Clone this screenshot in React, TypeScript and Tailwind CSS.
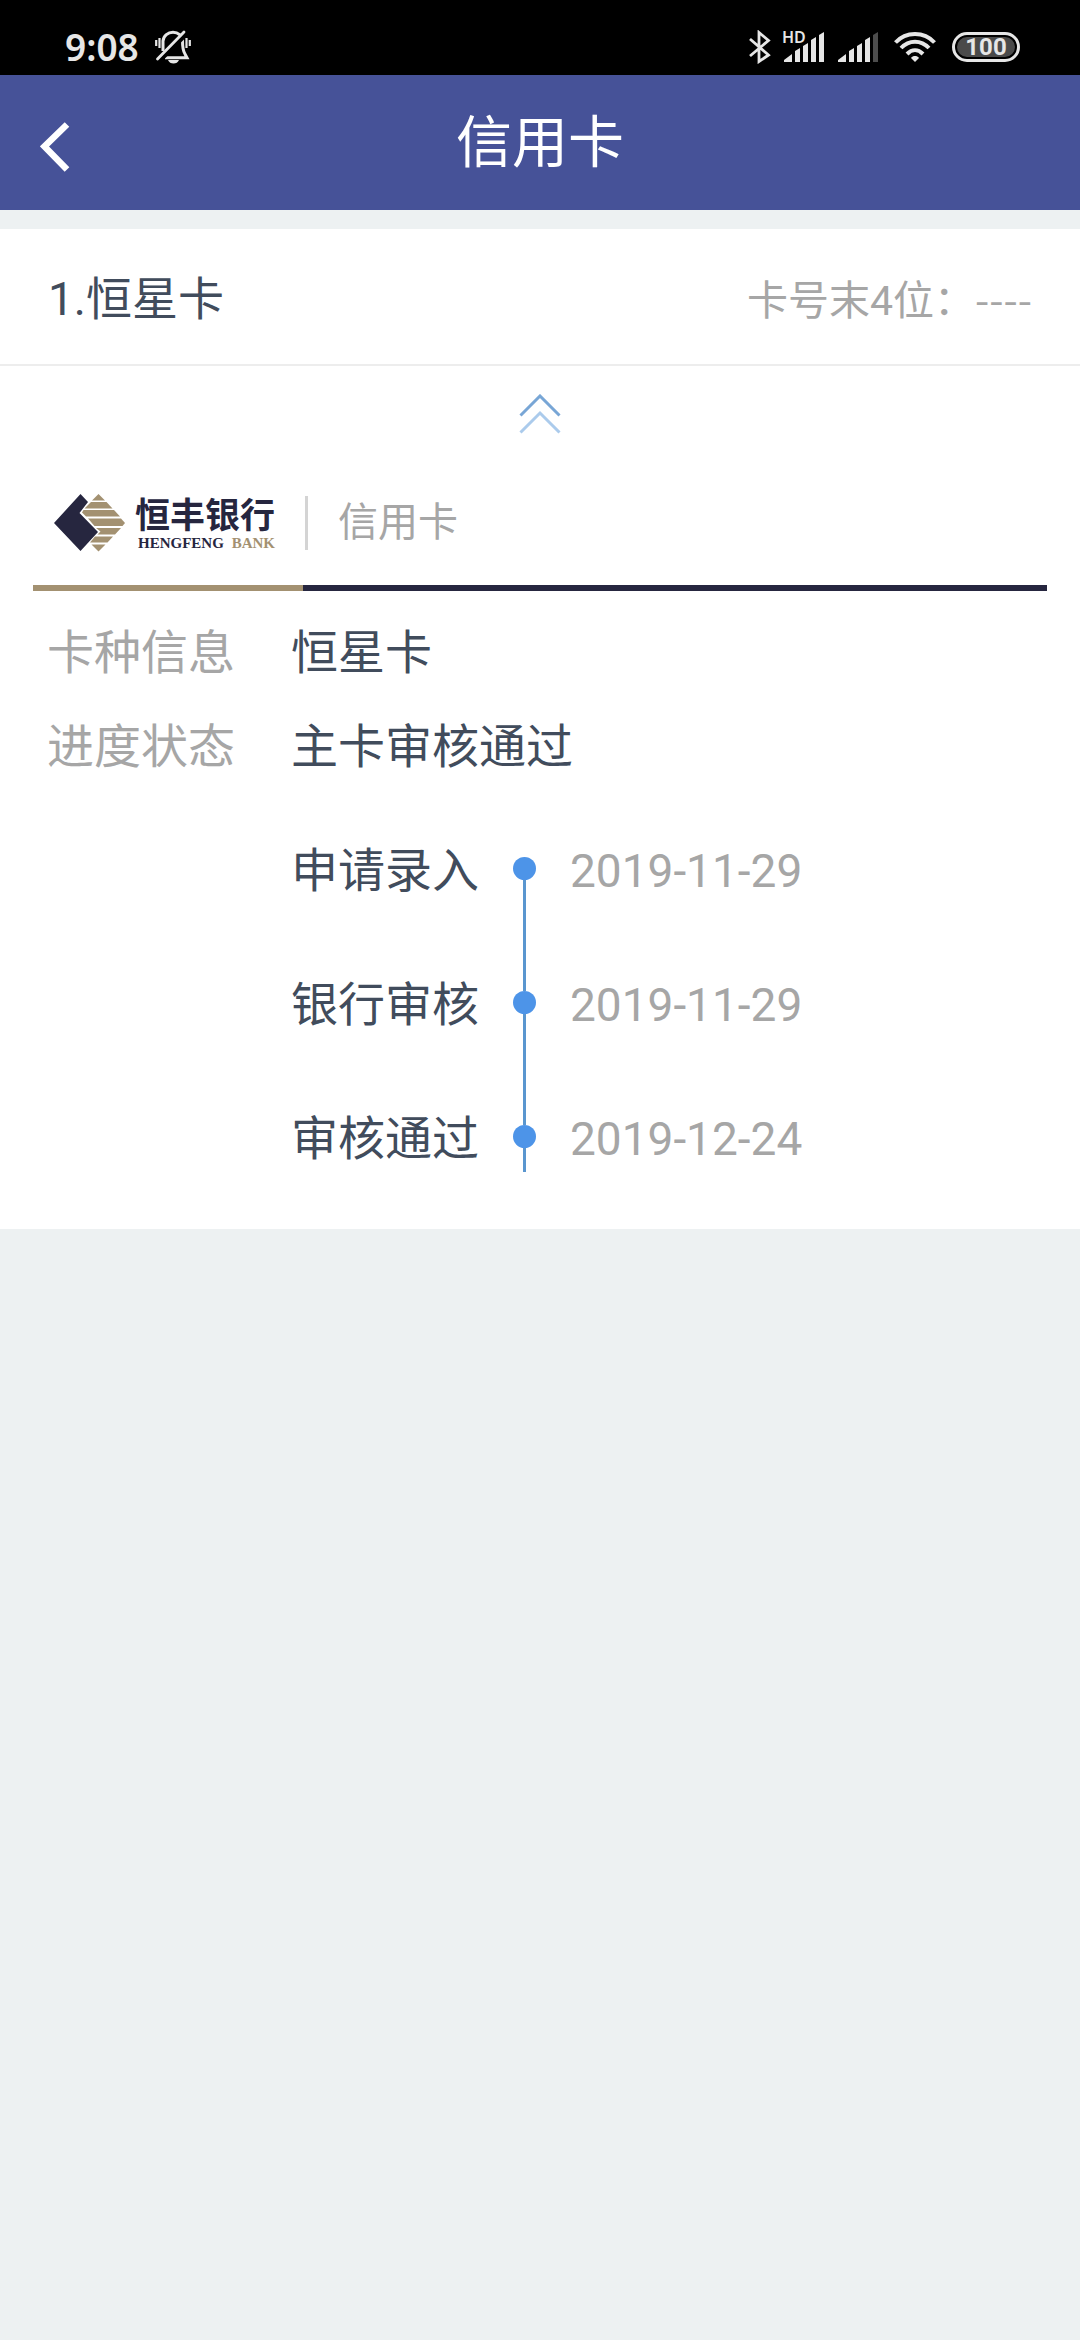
import React from 'react';

type Step = { label: string; date: string };

const steps: Step[] = [
	{ label: '申请录入', date: '2019-11-29' },
	{ label: '银行审核', date: '2019-11-29' },
	{ label: '审核通过', date: '2019-12-24' },
];

const details = [
	{ label: '卡种信息', value: '恒星卡' },
	{ label: '进度状态', value: '主卡审核通过' },
];

function MutedBell() {
	return (
		<svg viewBox="0 0 36 34" className="w-9 h-[34px]" fill="none" stroke="#e6e6e6" strokeWidth="3">
			<path d="M8 21V11C8.500 5.500 13 2.200 18 2.200s9.500 3.300 9.500 8.800c0 5 .2 9.500 2.500 13l2 3.800H10" />
			<path d="M4.500 31 31 4.500" stroke="#000" strokeWidth="4" />
			<path d="M2.500 29 29 2" strokeLinecap="round" strokeWidth="2.800" />
			<path d="M1.200 10v6M4.500 8v10M31.500 8v10M34.800 10v6" strokeWidth="2.200" />
			<path d="M13 30h11c-1 2.500-3 3.500-5.500 3.500s-4.500-1-5.500-3.500z" fill="#e6e6e6" stroke="none" />
		</svg>
	);
}

function Bluetooth() {
	return (
		<svg viewBox="0 0 22 34" className="w-[22px] h-[34px]" fill="none" stroke="#e6e6e6" strokeWidth="2.800">
			<path d="M1 9 19.500 25 10 31.500V2.500l9.500 8L1 26" />
		</svg>
	);
}

function Signal({ weak }: { weak?: boolean }) {
	return (
		<svg viewBox="0 0 41 30" className="w-[41px] h-[30px]" fill="#e6e6e6">
			<path d="M0 30v-2l8-6v8zM11 30V19l5-3v14zM19 30V14l5-3v19zM27 30V8l5-3v25z" />
			<path d="M35 30V3l5-3v30z" fill={weak ? '#4d4d4d' : '#e6e6e6'} />
		</svg>
	);
}

function Wifi() {
	return (
		<svg viewBox="0 0 42 30" className="w-[42px] h-[30px]" fill="none" stroke="#e6e6e6" strokeWidth="4">
			<path d="M1.500 10.500C12-.8 30-.8 40.500 10.500M7 16c8-8.500 20-8.500 28 0M13 22c5-5 11-5 16 0" />
			<path d="M17 26c2-2.600 6-2.600 8 0l-4 4z" fill="#e6e6e6" stroke="none" />
		</svg>
	);
}

function StatusBar() {
	return (
		<div className="flex h-[75px] items-center justify-between bg-black pt-[19px] pr-[60px] pl-[65px] text-[#e6e6e6]">
			<div className="flex items-center gap-4">
				<span className="font-['Noto_Sans'] text-[37px] leading-9 font-semibold">9:08</span>
				<MutedBell />
			</div>
			<div className="flex items-center">
				<Bluetooth />
				<div className="relative ml-[13px]">
					<Signal />
					<span className="absolute -top-[3px] -left-[2px] font-['Noto_Sans'] text-[16px] leading-4 font-semibold">HD</span>
				</div>
				<div className="ml-[13px]">
					<Signal weak />
				</div>
				<div className="ml-[15px]">
					<Wifi />
				</div>
				<div className="ml-4 flex h-[30px] w-[68px] items-center rounded-full border-[3px] border-[#e6e6e6] p-[2px]">
					<span className="flex h-5 w-full items-center justify-center rounded-full bg-[#4a4a4a] text-[24px] leading-5 font-bold">
						100
					</span>
				</div>
			</div>
		</div>
	);
}

function Header() {
	return (
		<header className="grid h-[135px] grid-cols-[1fr_auto_1fr] items-center bg-[#465298] text-white">
			<button type="button" aria-label="返回" className="flex h-full w-24 items-center pt-2 pl-10">
				<svg viewBox="0 0 30 50" className="w-[30px] h-[50px]" fill="none" stroke="#fff" strokeWidth="6.500">
					<path d="M27 2.500 4.500 24.500 27 47.500" />
				</svg>
			</button>
			<h1 className="text-[56px] leading-[64px]">信用卡</h1>
		</header>
	);
}

function BankLogo() {
	return (
		<div className="flex items-center">
			<svg viewBox="0 0 72 58" className="w-[72px] h-[58px]">
				<path d="M0 29 26.500 0 34 8 25.500 19 44 38 26.500 57z" fill="#26263f" />
				<g fill="#a39171">
					<path d="M44.500 0 51 6.500H38z" />
					<path d="M37 8h15.500l6 6.500h-28z" />
					<path d="M29.500 16h30.500l6 6.500H32l-4-4z" />
					<path d="M34 24.500h33l4 4.500-2.500 3H40.500z" />
					<path d="M42 34h25l-6 6.500H43.500l3-3z" />
					<path d="M41 42.500h18l-5.500 6H36z" />
					<path d="M37.500 50.500h14l-7 7z" />
				</g>
			</svg>
			<div className="ml-[9px] text-[#26263f]">
				<div className="pt-1 text-[35px] leading-9 font-bold">恒丰银行</div>
				<div className="flex justify-between pl-[3px] font-['Liberation_Serif'] text-[15px] leading-4 font-bold">
					<span>HENGFENG</span>
					<span className="text-[#a39171]">BANK</span>
				</div>
			</div>
		</div>
	);
}

function Timeline() {
	return (
		<ol className="mt-[82px] pl-[291px]">
			{steps.map((step, i) => (
				<li key={step.label} className="flex items-stretch leading-7">
					<span className="w-[188px] text-[47px] whitespace-nowrap text-[#414c5c]">{step.label}</span>
					<div className="ml-[34px] flex w-[23px] flex-col items-center">
						<span className="h-[23px] w-[23px] rounded-full bg-[#4d94e8]" />
						<span className={`w-[3px] bg-[#5a96cf] ${i < steps.length - 1 ? 'h-[111px]' : 'h-6'}`} />
					</div>
					<time className="ml-[34px] text-[46px] text-[#a6a6a6]">{step.date}</time>
				</li>
			))}
		</ol>
	);
}

export default function App() {
	return (
		<div className="min-h-screen bg-[#edf1f2] font-['Roboto','Noto_Sans_CJK_SC',sans-serif]">
			<StatusBar />
			<Header />
			<main className="mt-[19px] bg-white pb-[57px]">
				<div className="flex h-[137px] items-center justify-between border-b-2 border-[#ededed] px-12 pt-1">
					<h2 className="text-[46px] leading-[56px] text-[#414c5c]">1.恒星卡</h2>
					<div className="text-[41px] leading-[52px] text-[#a6a6a6]">
						卡号末4位：<span className="font-['Noto_Sans_CJK_SC',sans-serif]">----</span>
					</div>
				</div>
				<button type="button" aria-label="收起" className="flex w-full justify-center pt-7">
					<svg viewBox="0 0 42 40" className="w-[42px] h-10" fill="none" strokeWidth="3">
						<path d="M1.500 21.500 21 2l19.500 19.500" stroke="#78a6d6" />
						<path d="M1.500 38.500 21 19l19.500 19.500" stroke="#abcbec" />
					</svg>
				</button>
				<section className="px-[33px] pt-[60px]">
					<div className="flex items-center pl-[21px]">
						<BankLogo />
						<span className="ml-[30px] h-[54px] w-[3px] bg-[#d4d4d4]" />
						<span className="ml-[30px] text-[40px] leading-[56px] text-[#a6a6a6]">信用卡</span>
					</div>
					<div className="mt-[33px] flex h-[6px] bg-[#26263f]">
						<span className="w-[270px] bg-[#a39171]" />
					</div>
				</section>
				<dl className="mt-[34px] flex flex-col gap-[38px] px-[47px] text-[47px] leading-[56px]">
					{details.map((d) => (
						<div key={d.label} className="flex">
							<dt className="w-[244px] text-[#a6a6a6]">{d.label}</dt>
							<dd className="text-[#414c5c]">{d.value}</dd>
						</div>
					))}
				</dl>
				<Timeline />
			</main>
		</div>
	);
}
